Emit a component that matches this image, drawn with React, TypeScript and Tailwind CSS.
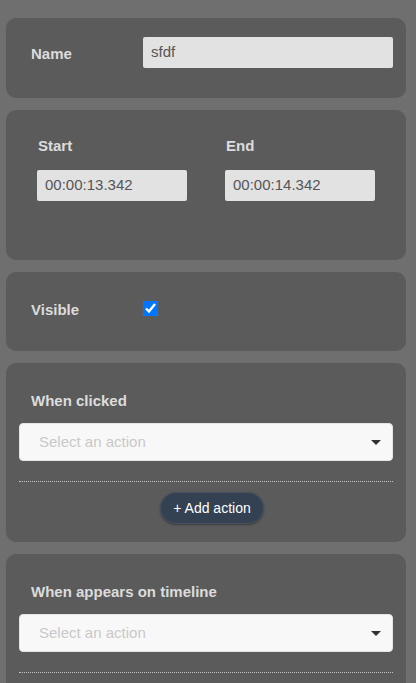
import { useState } from "react"

const font = { fontFamily: '"Liberation Sans", Arial, sans-serif' }

function ActionSelect() {
  return (
    <div className="relative h-[38px] rounded-[4px] border border-[#e4e4e4] bg-[#f8f8f8] flex items-center pl-[19px] pr-3">
      <span className="text-[15px] text-[#c9c9c9]">Select an action</span>
      <svg className="absolute right-[11px] top-[16px]" width="10" height="5" viewBox="0 0 10 5">
        <path d="M0 0 L10 0 L5 5 Z" fill="#333" />
      </svg>
    </div>
  )
}

function ActionBlock({ title, showButton }: { title: string; showButton?: boolean }) {
  return (
    <div className="shrink-0 rounded-[10px] bg-[#5b5b5b] px-[13px] pt-[29px] pb-[18px]">
      <div className="pl-3 text-[15px] leading-[17px] font-bold text-[#dcdcdc]">{title}</div>
      <div className="mt-[14px]">
        <ActionSelect />
      </div>
      <div className="mt-[20px] border-t border-dotted border-[#c4c4c4]" />
      {showButton && (
        <div className="flex justify-center mt-[10px] pl-[12px]">
          <button className="h-8 w-[104px] rounded-full bg-[#334152] border border-[#46525f] text-white text-[14px] shadow-[0_1px_2px_rgba(0,0,0,0.35)]">
            + Add action
          </button>
        </div>
      )}
    </div>
  )
}

export default function App() {
  const [visible, setVisible] = useState(true)

  return (
    <div className="h-[683px] overflow-hidden bg-[#6f6f6f]" style={font}>
      <div className="pl-[6px] pr-[10px] pt-[18px] flex flex-col gap-[12px]">
        {/* Name */}
        <div className="shrink-0 rounded-[10px] bg-[#5b5b5b] pl-[25px] pr-[13px] pt-[19px] pb-[30px]">
          <div className="flex items-center h-[31px]">
            <label className="w-[112px] mt-[4px] text-[15px] font-bold text-[#dcdcdc]">Name</label>
            <div className="flex-1 h-[31px] rounded-[2px] bg-[#e2e2e2] flex items-center px-2 text-[15px] text-[#555]">
              sfdf
            </div>
          </div>
        </div>

        {/* Start / End */}
        <div className="shrink-0 rounded-[10px] bg-[#5b5b5b] pl-[31px] pt-[27px] h-[150px]">
          <div className="flex">
            {[
              { label: "Start", value: "00:00:13.342" },
              { label: "End", value: "00:00:14.342" },
            ].map((f) => (
              <div key={f.label} className="w-[188px] shrink-0">
                <div className="pl-[1px] text-[15px] leading-[17px] font-bold text-[#dcdcdc]">{f.label}</div>
                <div className="mt-[16px] w-[150px] h-[31px] rounded-[2px] bg-[#e2e2e2] flex items-center px-2 text-[15px] text-[#555]">
                  {f.value}
                </div>
              </div>
            ))}
          </div>
        </div>

        {/* Visible */}
        <div className="shrink-0 rounded-[10px] bg-[#5b5b5b] pl-[25px] pt-[21px] pb-[27px]">
          <div className="flex items-center h-[31px]">
            <label className="w-[112px] mt-[3px] text-[15px] font-bold text-[#dcdcdc]">Visible</label>
            <input
              type="checkbox"
              checked={visible}
              onChange={(e) => setVisible(e.target.checked)}
              className="m-0 w-[15px] h-[15px] accent-[#0075ff]"
            />
          </div>
        </div>

        <ActionBlock title="When clicked" showButton />
        <ActionBlock title="When appears on timeline" />
      </div>
    </div>
  )
}
